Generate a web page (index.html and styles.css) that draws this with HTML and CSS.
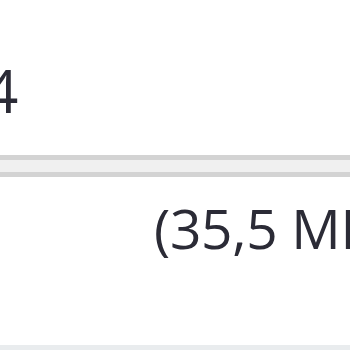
FILE: index.html
```html
<!DOCTYPE html>
<html>
<head>
<meta charset="utf-8">
<link rel="stylesheet" href="styles.css">
</head>
<body>
<div class="page">
  <div class="row-top"><span class="num">4</span></div>
  <div class="divider"></div>
  <div class="row-size"><span class="size">(35,5 MB)</span></div>
  <div class="footer"></div>
</div>
</body>
</html>
```
FILE: styles.css
```css
html, body {
  margin: 0;
  padding: 0;
  background: #ffffff;
  width: 350px;
  height: 350px;
  overflow: hidden;
}
.page {
  display: flex;
  flex-direction: column;
  width: 350px;
  height: 350px;
  font-family: "Open Sans", "Noto Sans", sans-serif;
  color: #2b2b36;
}
.row-top {
  height: 155px;
  display: flex;
  align-items: flex-start;
  overflow: hidden;
}
.num {
  font-size: 60px;
  line-height: 1;
  margin-top: 60px;
  margin-left: -16px;
}
.divider {
  height: 12px;
  background: #f0f0f0;
  border-top: 5px solid #d3d3d3;
  border-bottom: 5px solid #d3d3d3;
}
.row-size {
  flex: 1;
  display: flex;
  overflow: hidden;
  white-space: nowrap;
}
.size {
  font-size: 55px;
  line-height: 1;
  margin-top: 23px;
  margin-left: 154px;
  letter-spacing: -0.3px;
}
.footer {
  height: 5px;
  background: #e9ecee;
}
```
